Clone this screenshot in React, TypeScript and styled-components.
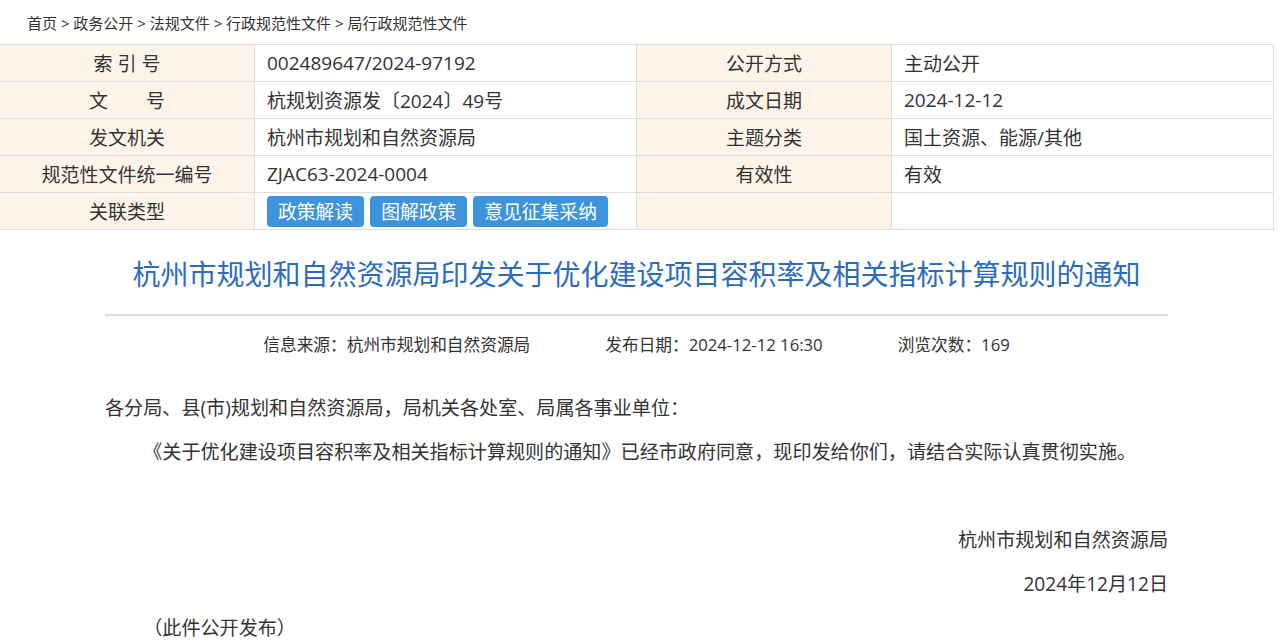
import React from 'react';
import styled, { createGlobalStyle } from 'styled-components';

const GlobalStyle = createGlobalStyle`
  html, body {
    margin: 0;
    padding: 0;
    background: #fff;
  }
  body {
    font-family: "Open Sans", "Noto Sans CJK SC", sans-serif;
    color: #333;
  }
  * {
    box-sizing: border-box;
  }
`;

const Page = styled.div`
  width: 1273px;
`;

const Breadcrumb = styled.div`
  height: 44px;
  display: flex;
  align-items: center;
  padding-left: 27px;
  font-size: 15px;
  color: #333;
  white-space: pre;
`;

const InfoTable = styled.div`
  display: grid;
  grid-template-columns: 255px 382px 255px 382px;
  grid-auto-rows: 37px;
  border-top: 1px solid #dedede;
  width: 1274px;
`;

const Cell = styled.div<{ $label?: boolean }>`
  display: flex;
  align-items: center;
  justify-content: ${(p) => (p.$label ? 'center' : 'flex-start')};
  padding-left: ${(p) => (p.$label ? '0' : '12px')};
  gap: 6px;
  background: ${(p) => (p.$label ? '#fdf3e9' : '#fff')};
  border-right: 1px solid #dedede;
  border-bottom: 1px solid #dedede;
  font-size: 19px;
  color: #333;
  white-space: pre;
`;

const TagButton = styled.span`
  display: inline-flex;
  align-items: center;
  height: 31px;
  padding: 0 11px;
  border-radius: 4px;
  background: #3d94dc;
  color: #fff;
  font-size: 18.8px;
`;

const Article = styled.div`
  padding: 0 105px;
`;

const Title = styled.div`
  margin-top: 22px;
  line-height: 44px;
  font-size: 28px;
  text-align: center;
  white-space: nowrap;
  color: #2c6cbd;
`;

const Divider = styled.div`
  margin-top: 18px;
  height: 2px;
  background: #dcdcdc;
`;

const Meta = styled.div`
  margin-top: 14px;
  display: flex;
  justify-content: center;
  gap: 75px;
  line-height: 30px;
  font-size: 16.7px;
  color: #333;
`;

const Body = styled.div`
  margin-top: 26px;
  font-size: 19.1px;
  color: #333;
`;

const Para = styled.p<{ $indent?: boolean; $right?: boolean }>`
  margin: 0;
  min-height: 44px;
  line-height: 44px;
  text-indent: ${(p) => (p.$indent ? '2em' : '0')};
  text-align: ${(p) => (p.$right ? 'right' : 'left')};
`;

const rows: [string, React.ReactNode, string, string][] = [
  ['索 引 号', '002489647/2024-97192', '公开方式', '主动公开'],
  ['文　　号', '杭规划资源发〔2024〕49号', '成文日期', '2024-12-12'],
  ['发文机关', '杭州市规划和自然资源局', '主题分类', '国土资源、能源/其他'],
  ['规范性文件统一编号', 'ZJAC63-2024-0004', '有效性', '有效'],
  [
    '关联类型',
    <>
      <TagButton>政策解读</TagButton>
      <TagButton>图解政策</TagButton>
      <TagButton>意见征集采纳</TagButton>
    </>,
    '',
    '',
  ],
];

const App: React.FC = () => {
  return (
    <Page>
      <GlobalStyle />
      <Breadcrumb>首页 &gt; 政务公开 &gt; 法规文件 &gt; 行政规范性文件 &gt; 局行政规范性文件</Breadcrumb>
      <InfoTable>
        {rows.map(([l1, v1, l2, v2], i) => (
          <React.Fragment key={i}>
            <Cell $label>{l1}</Cell>
            <Cell>{v1}</Cell>
            <Cell $label>{l2}</Cell>
            <Cell>{v2}</Cell>
          </React.Fragment>
        ))}
      </InfoTable>
      <Article>
        <Title>杭州市规划和自然资源局印发关于优化建设项目容积率及相关指标计算规则的通知</Title>
        <Divider />
        <Meta>
          <span>信息来源：杭州市规划和自然资源局</span>
          <span>发布日期：2024-12-12 16:30</span>
          <span>浏览次数：169</span>
        </Meta>
        <Body>
          <Para>各分局、县(市)规划和自然资源局，局机关各处室、局属各事业单位：</Para>
          <Para $indent>
            《关于优化建设项目容积率及相关指标计算规则的通知》已经市政府同意，现印发给你们，请结合实际认真贯彻实施。
          </Para>
          <Para />
          <Para $right>杭州市规划和自然资源局</Para>
          <Para $right>2024年12月12日</Para>
          <Para $indent>（此件公开发布）</Para>
        </Body>
      </Article>
    </Page>
  );
};

export default App;
